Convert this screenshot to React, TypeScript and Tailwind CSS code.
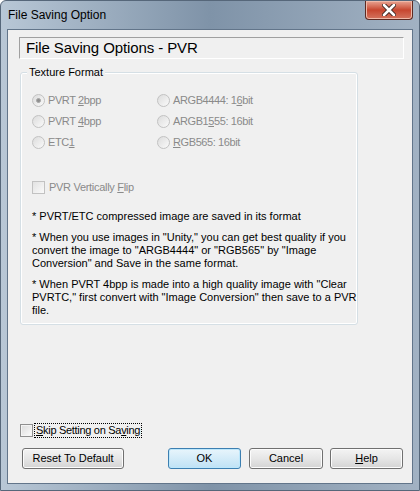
import React from "react";

const Radio = ({ checked, children }: { checked?: boolean; children: React.ReactNode }) => (
  <div className="flex items-center h-[21px] text-[#8a8a8a]">
    <span className="w-[13px] h-[13px] rounded-full border border-[#c2c2c2] bg-gradient-to-br from-[#dcdcdc] to-[#fafafa] flex items-center justify-center">
      {checked && <span className="w-[5px] h-[5px] rounded-full bg-[#8f8f8f] border border-[#a6a6a6]" />}
    </span>
    <span className="ml-[3px] tracking-[-0.4px]">{children}</span>
  </div>
);

const Btn = ({ children, def, className }: { children: React.ReactNode; def?: boolean; className?: string }) => (
  <button
    className={
      "h-[21px] rounded-[3px] border text-[11px] text-black flex items-center justify-center " +
      (def
        ? "border-[#3c7fb1] bg-gradient-to-b from-[#e8f5fc] to-[#bfe2f5] shadow-[inset_0_0_0_1px_#bde7fb] "
        : "border-[#707070] bg-gradient-to-b from-[#f4f4f4] via-[#e6e6e6] to-[#d4d4d4] shadow-[inset_0_0_0_1px_#fcfcfc] ") +
      (className ?? "")
    }
  >
    {children}
  </button>
);

export default function App() {
  return (
    <div className="w-[420px] h-[491px] font-['Liberation_Sans',Arial,sans-serif] bg-gradient-to-r from-[#b8c7d6] via-[#7f93a8] to-[#a2b2c3] border border-[#56677a] rounded-t-[6px] overflow-hidden">
      {/* Title bar */}
      <div className="h-[28px] flex items-start justify-between">
        <span className="ml-[7px] mt-[7px] text-[12px] text-black leading-[14px]">File Saving Option</span>
        <div className="mr-[6px] w-[48px] h-[19px] rounded-b-[4px] border border-t-0 border-[#5d2a22] bg-gradient-to-b from-[#e8a493] via-[#c7462f] to-[#d4735e] flex items-center justify-center shadow-[inset_0_0_0_1px_#f0b9a8]">
          <svg width="14" height="12" viewBox="0 0 14 12">
            <path d="M2 1 L12 11 M12 1 L2 11" stroke="#3a2420" strokeWidth="4.5" strokeLinecap="round" />
            <path d="M2 1 L12 11 M12 1 L2 11" stroke="#ffffff" strokeWidth="2.6" strokeLinecap="round" />
          </svg>
        </div>
      </div>

      {/* Client area */}
      <div className="ml-[6px] w-[406px] h-[455px] border border-[#62758a] bg-[#f0f0f0] text-[11px] text-black">
        {/* Header */}
        <div className="ml-[11px] mt-[7px] w-[385px] h-[22px] border border-t-[#a0a0a0] border-l-[#a0a0a0] border-b-white border-r-white flex items-center pl-[6px]">
          <span className="text-[15px] leading-[16px] tracking-[-0.1px]">File Saving Options - PVR</span>
        </div>

        {/* Group */}
        <div className="relative ml-[12px] mt-[13px] w-[338px] h-[253px] rounded-[3px] border border-[#d5dfe5] shadow-[inset_0_0_0_1px_#ffffff] pl-[11px] pt-[17px]">
          <span className="absolute left-[6px] top-[-8px] px-[2px] bg-[#f0f0f0] leading-[14px]">Texture Format</span>

          <div className="grid grid-cols-[125px_1fr]">
            <Radio checked>
              PVRT <u className="underline-offset-1">2</u>bpp
            </Radio>
            <Radio>
              ARGB4444: 1<u className="underline-offset-1">6</u>bit
            </Radio>
            <Radio>
              PVRT <u className="underline-offset-1">4</u>bpp
            </Radio>
            <Radio>
              ARGB1<u className="underline-offset-1">5</u>55: 16bit
            </Radio>
            <Radio>
              ETC<u className="underline-offset-1">1</u>
            </Radio>
            <Radio>
              <u className="underline-offset-1">R</u>GB565: 16bit
            </Radio>
          </div>

          <div className="mt-[26px] h-[16px] flex items-center text-[#8a8a8a]">
            <span className="w-[13px] h-[13px] border border-[#c2c2c2] bg-gradient-to-br from-[#e2e2e2] to-[#fafafa]" />
            <span className="ml-[4px] tracking-[-0.3px]">
              PVR Vertically <u className="underline-offset-1">F</u>lip
            </span>
          </div>

          <div className="leading-[13px]">
            <p className="mt-[15px]">* PVRT/ETC compressed image are saved in its format</p>
            <p className="mt-[8px]">
              * When you use images in "Unity," you can get best quality if you
              <br />
              convert the image to "ARGB4444" or "RGB565" by "Image
              <br />
              Conversion" and Save in the same format.
            </p>
            <p className="mt-[8px]">
              * When PVRT 4bpp is made into a high quality image with "Clear
              <br />
              PVRTC," first convert with "Image Conversion" then save to a PVR
              <br />
              file.
            </p>
          </div>
        </div>

        {/* Skip checkbox */}
        <div className="ml-[12px] mt-[98px] flex items-center h-[15px]">
          <span className="w-[13px] h-[13px] border border-[#8f8f8f] bg-gradient-to-br from-[#dcdcdc] to-[#fbfbfb] shadow-[inset_0_0_0_1px_#f4f4f4]" />
          <span className="ml-[1px] px-[1px] h-[15px] leading-[13px] border border-dotted border-black tracking-[-0.3px]">
            <u className="underline-offset-1">S</u>kip Setting on Sa<u className="underline-offset-1">v</u>ing
          </span>
        </div>

        {/* Buttons */}
        <div className="mt-[10px] flex">
          <Btn className="ml-[14px] w-[102px]">Reset To Default</Btn>
          <Btn def className="ml-[44px] w-[73px]">
            OK
          </Btn>
          <Btn className="ml-[8px] w-[74px]">Cancel</Btn>
          <Btn className="ml-[7px] w-[73px]">
            <u className="underline-offset-1">H</u>elp
          </Btn>
        </div>
      </div>
    </div>
  );
}
